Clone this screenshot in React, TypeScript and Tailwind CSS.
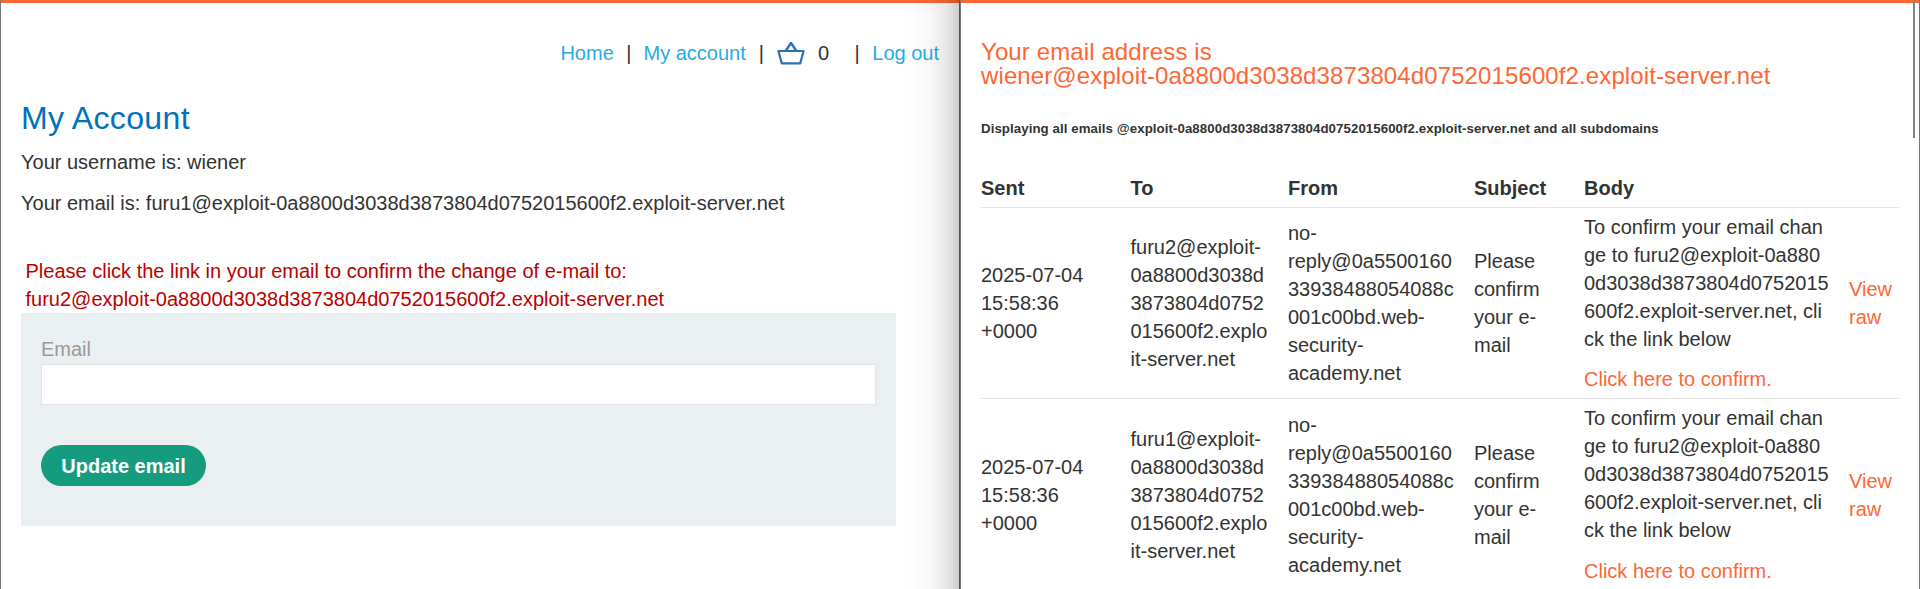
import React from 'react';

const DOMAIN = 'exploit-0a8800d3038d3873804d0752015600f2.exploit-server.net';

type Mail = { sent: string; to: string; from: string; subject: string; body: string };

const FROM = 'no-\nreply@0a5500160\n33938488054088c\n001c00bd.web-\nsecurity-\nacademy.net';
const BODY =
  'To confirm your email chan\nge to furu2@exploit-0a880\n0d3038d3873804d0752015\n600f2.exploit-server.net, cli\nck the link below';

const mails: Mail[] = [
  {
    sent: '2025-07-04\n15:58:36\n+0000',
    to: 'furu2@exploit-\n0a8800d3038d\n3873804d0752\n015600f2.explo\nit-server.net',
    from: FROM,
    subject: 'Please\nconfirm\nyour e-\nmail',
    body: BODY,
  },
  {
    sent: '2025-07-04\n15:58:36\n+0000',
    to: 'furu1@exploit-\n0a8800d3038d\n3873804d0752\n015600f2.explo\nit-server.net',
    from: FROM,
    subject: 'Please\nconfirm\nyour e-\nmail',
    body: BODY,
  },
];

function Basket() {
  return (
    <svg
      width="28"
      height="25"
      viewBox="0 0 28 25"
      fill="none"
      stroke="#2a71b8"
      strokeWidth="2.2"
      strokeLinejoin="round"
      className="mt-px ml-[13px] shrink-0"
    >
      <path d="M1.4 11H26.6L23.2 23.4H4.8Z" />
      <path d="M8.8 10.6L14 3L19.2 10.6" strokeWidth="2.5" />
    </svg>
  );
}

function AccountPane() {
  return (
    <section className="relative h-full w-[960px] shrink-0 overflow-hidden border-x border-l-[#777777] border-r-[#555555] bg-white">
      <div className="h-[3px] bg-[#ff6633]" />
      <nav className="mt-9 flex h-7 justify-end pr-[20px] whitespace-pre">
        <a className="text-[#29abe2]">Home</a>
        <span className="ml-[12.5px]">|</span>
        <a className="ml-[12px] text-[#29abe2]">My account</a>
        <span className="ml-[13px]">|</span>
        <Basket />
        <span className="ml-[13px]">0</span>
        <span className="ml-[25.5px]">|</span>
        <a className="ml-[12.5px] text-[#29abe2]">Log out</a>
      </nav>
      <div className="pl-5">
        <h1 className="mt-[33px] h-9 text-[32px] leading-9 tracking-[0.35px] text-[#0071bc]">My Account</h1>
        <p className="mt-[12px]">Your username is: wiener</p>
        <p className="mt-[13px]">Your email is: furu1@{DOMAIN}</p>
        <p className="mt-[40px] pl-[4.5px] text-[#bb0000]">
          Please click the link in your email to confirm the change of e-mail to:
          <br />
          furu2@{DOMAIN}
        </p>
        <form className="h-[213px] w-[875px] bg-[#eaeff2] px-5 pt-[22px]">
          <label className="block text-[#999999]">Email</label>
          <input className="mt-px block h-[41px] w-full border border-[#e4e4e4] bg-white px-2 outline-none" />
          <button
            type="button"
            className="mt-10 block h-[41px] w-[165px] rounded-full bg-[#159b7f] text-center font-bold text-white"
          >
            Update email
          </button>
        </form>
      </div>
      <div className="pointer-events-none absolute inset-y-0 right-0 w-[64px] bg-[linear-gradient(to_right,rgba(0,0,0,0)_0%,rgba(0,0,0,0.008)_30%,rgba(0,0,0,0.03)_55%,rgba(0,0,0,0.08)_75%,rgba(0,0,0,0.14)_90%,rgba(0,0,0,0.2)_100%)]" />
    </section>
  );
}

function MailPane() {
  return (
    <section className="relative h-full w-[960px] shrink-0 overflow-hidden border-x border-[#777777] bg-white">
      <div className="h-[3px] bg-[#ff6633]" />
      <div className="px-5">
        <h1 className="mt-[37px] text-2xl leading-6 tracking-[0.11px] text-[#ff6633]">
          Your email address is
          <br />
          wiener@{DOMAIN}
        </h1>
        <h5 className="mt-[32px] h-[18px] text-[13.28px] leading-[18px] font-bold tracking-[0.07px] whitespace-nowrap">
          Displaying all emails @{DOMAIN} and all subdomains
        </h5>
        <table className="mt-[35px] w-[918px] table-fixed border-collapse text-left whitespace-pre">
          <colgroup>
            <col className="w-[149.5px]" />
            <col className="w-[157.5px]" />
            <col className="w-[186px]" />
            <col className="w-[110px]" />
            <col className="w-[265px]" />
            <col className="w-[50px]" />
          </colgroup>
          <thead>
            <tr className="h-[34px] border-b border-[#e4e4e4]">
              {['Sent', 'To', 'From', 'Subject', 'Body', ''].map((h) => (
                <th key={h} className="p-0 pb-[5px] align-bottom font-bold">
                  {h}
                </th>
              ))}
            </tr>
          </thead>
          <tbody>
            {mails.map((m) => (
              <tr key={m.to} className="group border-b border-[#e4e4e4] align-middle">
                <td className="p-0">{m.sent}</td>
                <td className="p-0">{m.to}</td>
                <td className="p-0">{m.from}</td>
                <td className="p-0">{m.subject}</td>
                <td className="px-0 pt-[5px] pb-[5px] group-last:pb-[6px]">
                  <p>{m.body}</p>
                  <p className="mt-3 text-[#ff6633] group-last:mt-[13px]">Click here to confirm.</p>
                </td>
                <td className="p-0 text-[#ff6633]">{'View\nraw'}</td>
              </tr>
            ))}
          </tbody>
        </table>
      </div>
      <div className="absolute top-0 right-1 h-[138px] w-[2px] bg-[#858585]" />
    </section>
  );
}

export default function App() {
  return (
    <div className="flex h-[589px] w-[1920px] overflow-hidden bg-white font-['Liberation_Sans',Arial,sans-serif] text-xl leading-7 text-[#333332]">
      <AccountPane />
      <MailPane />
    </div>
  );
}
